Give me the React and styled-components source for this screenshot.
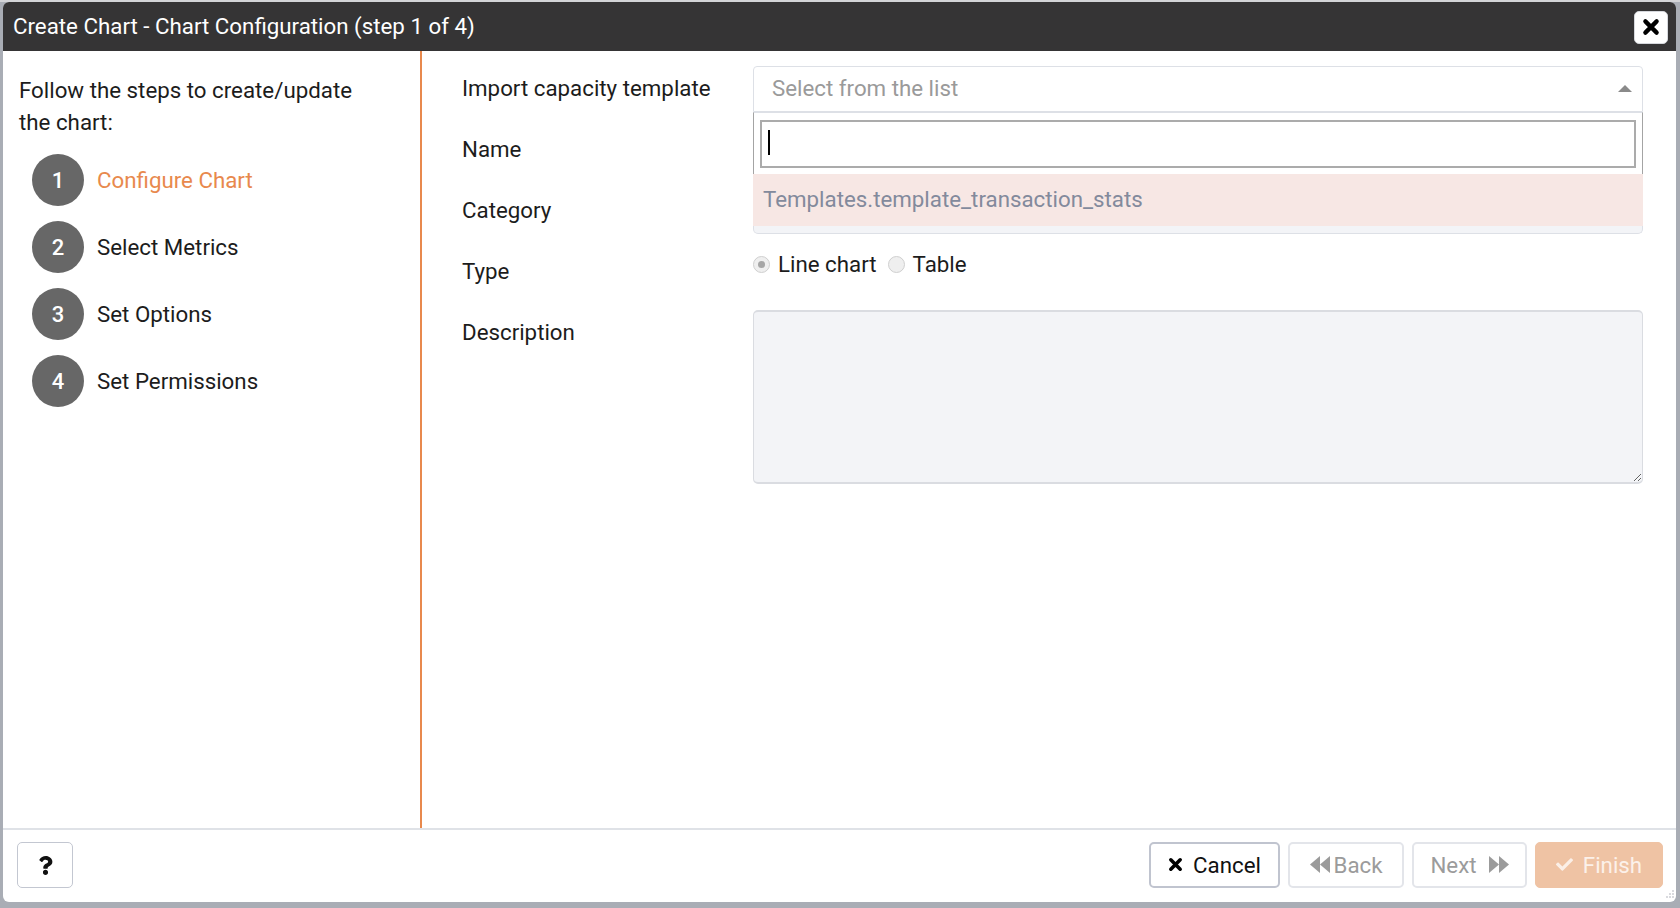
import React from 'react';
import styled, { createGlobalStyle } from 'styled-components';
import { FaCheck, FaQuestion } from 'react-icons/fa';

const GlobalStyle = createGlobalStyle`
  html, body {
    margin: 0;
    padding: 0;
    background: #a9adb5;
    font-family: Roboto, "Liberation Sans", Arial, sans-serif;
  }
  * { box-sizing: border-box; }
`;

const Page = styled.div`
  padding: 2px 4px 6px 3px;
  height: 908px;
  background: linear-gradient(#d3d4d7 0, #d3d4d7 2px, #a9adb5 2px);
`;

const Dialog = styled.div`
  position: relative;
  height: 900px;
  background: #fff;
  border-radius: 6px;
  overflow: hidden;
  display: flex;
  flex-direction: column;
`;

const Header = styled.div`
  height: 49px;
  flex: none;
  background: #353435;
  color: #fff;
  display: flex;
  align-items: center;
  justify-content: space-between;
  padding: 0 8px 2px 10px;
  font-size: 22.3px;
`;

const CloseButton = styled.button`
  width: 34px;
  height: 33px;
  margin-top: 3px;
  background: #fff;
  border: 1px solid #d6d8dd;
  border-radius: 5px;
  display: flex;
  align-items: center;
  justify-content: center;
  padding: 0;
  color: #000;
`;

const Body = styled.div`
  flex: 1;
  display: flex;
  min-height: 0;
`;

const StepsPanel = styled.div`
  width: 419px;
  flex: none;
  border-right: 2px solid #e8894d;
  padding: 23px 16px 0 16px;
`;

const Intro = styled.div`
  font-size: 22.3px;
  line-height: 32px;
  color: #1c1c1c;
  width: 350px;
`;

const StepList = styled.div`
  margin-top: 16px;
  padding-left: 13px;
  display: flex;
  flex-direction: column;
  gap: 15px;
`;

const Step = styled.div`
  display: flex;
  align-items: center;
  gap: 13px;
`;

const StepNumber = styled.div`
  width: 52px;
  height: 52px;
  border-radius: 50%;
  background: #676767;
  color: #fff;
  font-size: 22px;
  font-weight: 500;
  display: flex;
  align-items: center;
  justify-content: center;
`;

const StepLabel = styled.div`
  font-size: 22.3px;
  color: ${(p) => (p.$active ? '#e8894d' : '#1c1c1c')};
`;

const FormPanel = styled.div`
  flex: 1;
  padding: 15px 33px 0 40px;
  display: flex;
  flex-direction: column;
  gap: 15px;
`;

const FormRow = styled.div`
  display: flex;
  align-items: flex-start;
  min-height: 46px;
`;

const Label = styled.div`
  width: 291px;
  flex: none;
  font-size: 22.3px;
  line-height: 44px;
  color: #1c1c1c;
`;

const Control = styled.div`
  flex: 1;
  position: relative;
`;

const SelectBox = styled.div`
  height: 46px;
  border: 1px solid #dde0e6;
  border-radius: 4px 4px 0 0;
  display: flex;
  align-items: center;
  justify-content: space-between;
  padding: 0 10px 2px 18px;
  font-size: 22.3px;
  color: #9a9a9a;
  background: #fff;
`;

const ArrowUp = styled.span`
  width: 0;
  height: 0;
  border-left: 7px solid transparent;
  border-right: 7px solid transparent;
  border-bottom: 7px solid #8a8a8a;
`;

const Dropdown = styled.div`
  position: absolute;
  top: 46px;
  left: 0;
  right: 0;
  z-index: 5;
  background: #fff;
`;

const SearchWrap = styled.div`
  padding: 7px 6px 6px 6px;
  border-top: 1px solid #dde0e6;
  border-left: 1px solid #a4a4a4;
  border-right: 1px solid #a4a4a4;
`;

const SearchField = styled.div`
  height: 48px;
  border: 2px solid #ababab;
  display: flex;
  align-items: center;
  padding-left: 6px;
`;

const Caret = styled.span`
  width: 2px;
  height: 25px;
  margin-top: -3px;
  background: #000;
`;

const Option = styled.div`
  height: 52px;
  background: #f7e7e4;
  display: flex;
  align-items: center;
  padding: 0 0 2px 10px;
  font-size: 22.3px;
  color: #838a9c;
`;

const DropdownFoot = styled.div`
  height: 8px;
  background: #f3f4f7;
  border: 1px solid #dde0e6;
  border-top: none;
  border-radius: 0 0 5px 5px;
`;

const TextInput = styled.div`
  height: 46px;
  border: 1px solid #dde0e6;
  border-radius: 4px;
  background: #fff;
`;

const RadioGroup = styled.div`
  display: flex;
  align-items: center;
  height: 30px;
  font-size: 22.3px;
  color: #1c1c1c;
`;

const RadioItem = styled.label`
  display: flex;
  align-items: center;
  gap: 8px;
  margin-right: 11px;
`;

const RadioDot = styled.span`
  width: 17px;
  height: 17px;
  border-radius: 50%;
  border: 1px solid #cfcfcf;
  background: #efefef;
  display: flex;
  align-items: center;
  justify-content: center;
  &::after {
    content: '';
    width: 7px;
    height: 7px;
    border-radius: 50%;
    background: ${(p) => (p.$checked ? '#a6a6a6' : 'transparent')};
  }
`;

const TextArea = styled.textarea`
  display: block;
  width: 100%;
  height: 174px;
  margin: 0;
  background: #f3f4f7;
  border: 1px solid #dadce1;
  border-top-width: 2px;
  border-bottom-width: 2px;
  border-radius: 5px;
  font-family: inherit;
  font-size: 22px;
  outline: none;
`;

const Footer = styled.div`
  height: 74px;
  flex: none;
  border-top: 2px solid #dfe2e7;
  display: flex;
  align-items: flex-start;
  justify-content: space-between;
  padding: 12px 13px 0 14px;
`;

const HelpButton = styled.button`
  width: 56px;
  height: 46px;
  background: #fff;
  border: 1px solid #c3c7d1;
  border-radius: 5px;
  display: flex;
  align-items: center;
  justify-content: center;
  color: #111;
  padding: 0;
`;

const ButtonBar = styled.div`
  display: flex;
  gap: 8px;
`;

const Button = styled.button`
  height: 46px;
  width: ${(p) => p.$w}px;
  display: flex;
  align-items: center;
  justify-content: center;
  gap: ${(p) => p.$gap || 8}px;
  font-family: inherit;
  font-size: 22.3px;
  border-radius: 5px;
  padding: 0 0 1px;
  background: ${(p) => (p.$primary ? '#efc3a4' : '#fff')};
  color: ${(p) => (p.$primary ? '#fcf1ea' : p.$disabled ? '#9b9b9b' : '#111')};
  border: ${(p) =>
    p.$primary ? '1px solid #efc3a4' : p.$disabled ? '2px solid #e3e5ea' : '2px solid #c0c4cf'};
`;

const Grip = styled.svg`
  position: absolute;
  right: 2px;
  bottom: 2px;
`;

function Backward() {
  return (
    <svg width="20" height="19" viewBox="0 0 20 19">
      <polygon points="0,9.5 10,1 10,18" fill="#9b9b9b" />
      <polygon points="10,9.5 20,1 20,18" fill="#9b9b9b" />
    </svg>
  );
}

function Forward() {
  return (
    <svg width="20" height="19" viewBox="0 0 20 19">
      <polygon points="0,1 10,9.5 0,18" fill="#9b9b9b" />
      <polygon points="10,1 20,9.5 10,18" fill="#9b9b9b" />
    </svg>
  );
}

function ThickX({ size }) {
  return (
    <svg width={size} height={size} viewBox="0 0 16 16">
      <path d="M3 3 L13 13 M13 3 L3 13" stroke="#000" strokeWidth="3.8" strokeLinecap="round" />
    </svg>
  );
}

const steps = ['Configure Chart', 'Select Metrics', 'Set Options', 'Set Permissions'];

export default function App() {
  return (
    <>
      <GlobalStyle />
      <Page>
        <Dialog>
          <Header>
            <span>Create Chart - Chart Configuration (step 1 of 4)</span>
            <CloseButton>
              <ThickX size={18} />
            </CloseButton>
          </Header>
          <Body>
            <StepsPanel>
              <Intro>Follow the steps to create/update the chart:</Intro>
              <StepList>
                {steps.map((s, i) => (
                  <Step key={s}>
                    <StepNumber>{i + 1}</StepNumber>
                    <StepLabel $active={i === 0}>{s}</StepLabel>
                  </Step>
                ))}
              </StepList>
            </StepsPanel>
            <FormPanel>
              <FormRow>
                <Label>Import capacity template</Label>
                <Control>
                  <SelectBox>
                    <span>Select from the list</span>
                    <ArrowUp />
                  </SelectBox>
                  <Dropdown>
                    <SearchWrap>
                      <SearchField>
                        <Caret />
                      </SearchField>
                    </SearchWrap>
                    <Option>Templates.template_transaction_stats</Option>
                    <DropdownFoot />
                  </Dropdown>
                </Control>
              </FormRow>
              <FormRow>
                <Label>Name</Label>
                <Control>
                  <TextInput />
                </Control>
              </FormRow>
              <FormRow>
                <Label>Category</Label>
                <Control>
                  <TextInput />
                </Control>
              </FormRow>
              <FormRow>
                <Label>Type</Label>
                <Control>
                  <RadioGroup>
                    <RadioItem>
                      <RadioDot $checked />
                      Line chart
                    </RadioItem>
                    <RadioItem>
                      <RadioDot />
                      Table
                    </RadioItem>
                  </RadioGroup>
                </Control>
              </FormRow>
              <FormRow>
                <Label>Description</Label>
                <Control>
                  <TextArea />
                </Control>
              </FormRow>
            </FormPanel>
          </Body>
          <Footer>
            <HelpButton>
              <FaQuestion size={19} />
            </HelpButton>
            <ButtonBar>
              <Button $w={131} $gap={10}>
                <ThickX size={15} />
                Cancel
              </Button>
              <Button $w={116} $disabled $gap={4}>
                <Backward />
                Back
              </Button>
              <Button $w={115} $disabled $gap={12}>
                Next
                <Forward />
              </Button>
              <Button $w={128} $primary $gap={10}>
                <FaCheck size={17} color="#fbefe7" />
                Finish
              </Button>
            </ButtonBar>
          </Footer>
          <Grip width="10" height="10" viewBox="0 0 10 10">
            <circle cx="9" cy="1" r="0.8" fill="#a8acb4" />
            <circle cx="6" cy="4" r="0.8" fill="#a8acb4" />
            <circle cx="9" cy="4" r="0.8" fill="#a8acb4" />
            <circle cx="3" cy="7" r="0.8" fill="#a8acb4" />
            <circle cx="6" cy="7" r="0.8" fill="#a8acb4" />
            <circle cx="9" cy="7" r="0.8" fill="#a8acb4" />
          </Grip>
        </Dialog>
      </Page>
    </>
  );
}
